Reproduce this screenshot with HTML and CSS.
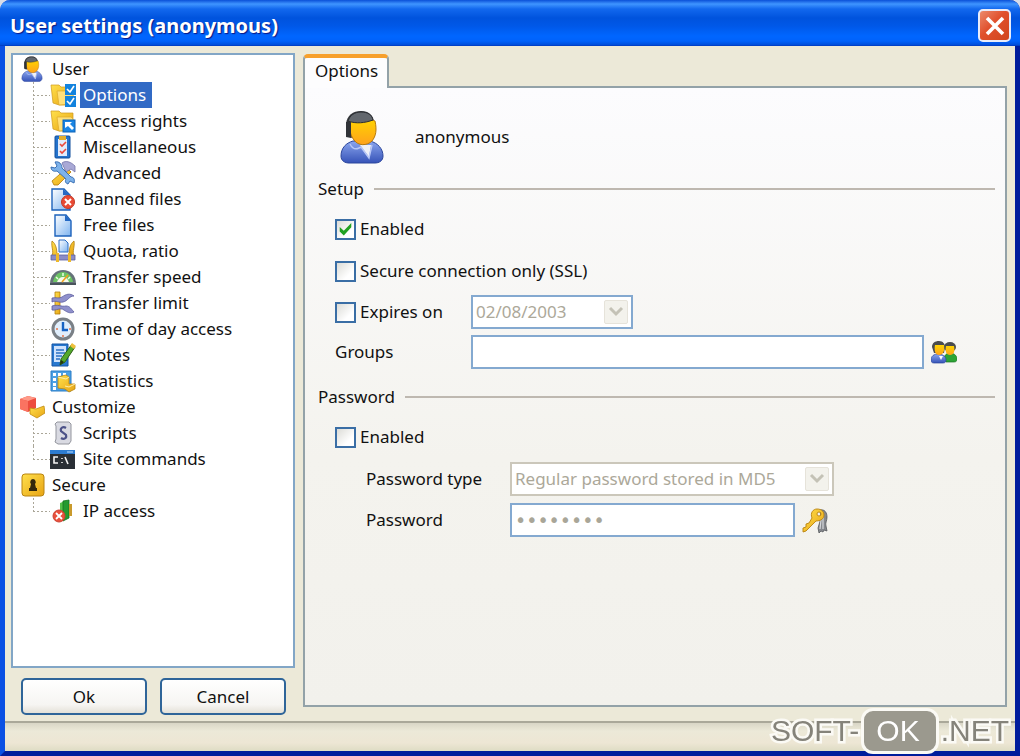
FILE: index.html
```html
<!DOCTYPE html>
<html lang="en">
<head>
  <meta charset="utf-8">
  <title>User settings (anonymous)</title>
  <link rel="stylesheet" href="styles.css">
</head>
<body>

<svg width="0" height="0" class="defs" aria-hidden="true">
  <defs>
    <linearGradient id="gold" x1="0" y1="0" x2="1" y2="1">
      <stop offset="0" stop-color="#ffe04c"/><stop offset="1" stop-color="#e8a414"/>
    </linearGradient>
    <linearGradient id="face" x1="0" y1="0" x2="0" y2="1">
      <stop offset="0" stop-color="#ffd400"/><stop offset="1" stop-color="#ffa21c"/>
    </linearGradient>
    <linearGradient id="suit" x1="0" y1="0" x2="0" y2="1">
      <stop offset="0" stop-color="#8ba6ee"/><stop offset="1" stop-color="#3653b8"/>
    </linearGradient>
    <linearGradient id="paper" x1="0" y1="0" x2="1" y2="1">
      <stop offset="0" stop-color="#ffffff"/><stop offset="1" stop-color="#7db3f0"/>
    </linearGradient>
  </defs>

  <symbol id="i-user" viewBox="0 0 44 54">
    <path d="M1 46c0-8 5-13 12-15h17c8 2 13 8 13 15 0 5-4 7-8 7H9c-4 0-8-2-8-7z" fill="url(#suit)" stroke="#2b469c"/>
    <path d="M20 35l9 12 2-12z" fill="#f0f1f8"/>
    <path d="M10 34c2 4 5 6 9 4l2-1 8 11 3-13" fill="none" stroke="#b9c8f6" stroke-width="1.4"/>
    <path d="M6 14C7 5 13 1 21 1c8 0 12 4 13 11l-3 6-20 10-5-1z" fill="#33363a"/>
    <path d="M10 11c8-3 17-3 25 0 2 9 1 15-3 20-5 5-14 5-18-1-4-5-5-12-4-19z" fill="url(#face)" stroke="#b87a0a"/>
    <path d="M8 11c2-6 7-9 13-9 7 0 11 3 12 8-8 3-17 4-25 1z" fill="#62676d" stroke="#2c2f33"/>
    <path d="M6 12h5v15H8l-2-3z" fill="#303338"/>
  </symbol>

  <symbol id="i-folder" viewBox="0 0 26 26">
    <path d="M1 3h8l2 2h12v18H9l-6-2z" fill="url(#gold)" stroke="#cf9a1c" stroke-width=".7"/>
    <path d="M7 9h14l2 2v11l-14 1z" fill="#ffe079" stroke="#dba92c" stroke-width=".7"/>
  </symbol>

  <symbol id="i-options" viewBox="0 0 26 26">
    <use href="#i-folder"/>
    <rect x="15" y="2" width="11" height="11" fill="#1383de"/>
    <rect x="15" y="14" width="11" height="11" fill="#1383de"/>
    <path d="M17 7l3 3 4-6M17 19l3 3 4-6" fill="none" stroke="#fff" stroke-width="1.6"/>
  </symbol>

  <symbol id="i-access" viewBox="0 0 26 26">
    <use href="#i-folder"/>
    <rect x="13" y="12" width="12" height="12" fill="#1b86e4" stroke="#0c62b8"/>
    <path d="M15 14h7l-2 2 4 4-2 2-4-4-3 2z" fill="#fff"/>
  </symbol>

  <symbol id="i-misc" viewBox="0 0 26 26">
    <rect x="5" y="2" width="15" height="22" rx="1" fill="#2473cc" stroke="#114f9c"/>
    <rect x="8" y="5" width="9" height="17" fill="#e2ecfc"/>
    <path d="M9 2h7v4H9z" fill="#e4ae2c"/>
    <path d="M10 10l2 2 4-4M10 17l2 2 4-4" fill="none" stroke="#ec4a3c" stroke-width="1.6"/>
  </symbol>

  <symbol id="i-advanced" viewBox="0 0 26 26">
    <path d="M2 21L17 8l4 4L8 25H4z" fill="url(#gold)" stroke="#b37a08" stroke-width=".8"/>
    <path d="M12 3c4-3 9-1 13 3v6l-4-3-5 3z" fill="#a9a9d6" stroke="#7474aa" stroke-width=".8"/>
    <path d="M1 7l4 1 2-2-2-4c4-1 7 2 7 6l9 9c3 0 4 3 3 6l-4-2-2 3c-3-1-3-3-2-5l-9-8C3 12 1 10 1 7z" fill="#7db2ea" stroke="#2e65ae" stroke-width=".9"/>
  </symbol>

  <symbol id="i-file" viewBox="0 0 26 26">
    <path d="M5 3h11l5 6v15H5z" fill="url(#paper)" stroke="#1d62bb" stroke-width="1.4"/>
    <path d="M15 3v6h6z" fill="#2468c4"/>
  </symbol>

  <symbol id="i-banned" viewBox="0 0 26 26">
    <path d="M2 3h12l6 6v15H2z" fill="url(#paper)" stroke="#1d62bb" stroke-width="1.4"/>
    <path d="M13 3v6h7z" fill="#2468c4"/>
    <circle cx="18" cy="16" r="6.500" fill="#e94a34" stroke="#c23a28"/>
    <path d="M15 13l6 6M21 13l-6 6" stroke="#fff" stroke-width="2"/>
  </symbol>

  <symbol id="i-quota" viewBox="0 0 26 26">
    <path d="M9 2h6l3 3v9H9z" fill="url(#paper)" stroke="#2a6cc4"/>
    <path d="M2 3c4 3 5 8 5 15H2c2-5-1-9 0-15zM24 3c-4 3-5 8-5 15h5c-2-5 1-9 0-15z" fill="url(#gold)" stroke="#b07c0c" stroke-width=".8"/>
    <path d="M1 17h24v5H1z" fill="#8b8cc6" stroke="#5d5f9c" stroke-width=".8"/>
    <path d="M6 15h3v9H6zM18 15h3v9h-3z" fill="#edb92c"/>
  </symbol>

  <symbol id="i-speed" viewBox="0 0 26 26">
    <path d="M0 20C0 11 6 6 13 6s13 5 13 14z" fill="#66727a"/>
    <path d="M3 18c1-6 5-10 10-10s9 4 10 10z" fill="#6cc464"/>
    <path d="M7 18c1-3 3-5 6-5s5 2 6 5z" fill="#f5faea"/>
    <path d="M6 13l2 2M13 9v3M20 13l-2 2" stroke="#eaffdf" stroke-width="1.5"/>
    <path d="M12 18l6-7" stroke="#f4a01c" stroke-width="1.6"/>
    <path d="M0 19h26v2H0z" fill="#4a545c"/>
  </symbol>

  <symbol id="i-limit" viewBox="0 0 26 26">
    <path d="M5 2h5v22H5z" fill="url(#gold)" stroke="#b07c0c" stroke-width=".8"/>
    <path d="M2 8c4-1 7 1 10-1 4-3 8-4 12-1-5 0-6 5-11 6-4 1-7-2-11 0zM2 16c6-2 9 1 14 0 4 0 5 3 8 6-4 2-7 0-10-2-4-3-8 1-12 0z" fill="#8f90cc" stroke="#5a5c9e" stroke-width=".8"/>
  </symbol>

  <symbol id="i-clock" viewBox="0 0 26 26">
    <circle cx="13" cy="13" r="10" fill="#e0eefc" stroke="#7a8086" stroke-width="3"/>
    <path d="M13 6v8h5" fill="none" stroke="#1763c4" stroke-width="2.400"/>
    <path d="M13 19v2M6 13h2M19 13h2" stroke="#e87446" stroke-width="1.500"/>
  </symbol>

  <symbol id="i-notes" viewBox="0 0 26 26">
    <path d="M2 2h16v22H2z" fill="#2878d0" stroke="#1555a4"/>
    <path d="M4 4h12v16H4z" fill="#cfe2fc"/>
    <path d="M6 8h8M6 11h9M6 14h6M6 17h4" stroke="#2d71c4" stroke-width="1.600"/>
    <path d="M22 2l3 3-10 15-5 3 1-6z" fill="#54a92c" stroke="#2a5f12"/>
    <path d="M20 4l2-3 4 3-2 3z" fill="#efc03c"/>
    <path d="M11 18l3 2-4 3z" fill="#26340f"/>
  </symbol>

  <symbol id="i-stats" viewBox="0 0 26 26">
    <path d="M1 3h20v20H1z" fill="#4ba0e4" stroke="#2a7cc6"/>
    <path d="M3 5h3v3H3zM8 5h3v3H8zM13 5h3v3h-3zM3 10h3v3H3zM3 15h3v3H3zM3 19h3v3H3z" fill="#fff"/>
    <path d="M8 9l8-2 3 2v7l6 0v5l-6 3-4-3-7-1z" fill="url(#gold)" stroke="#bb860e" stroke-width=".8"/>
    <path d="M8 9l8 2 3-2M15 18l4 1 6-3" fill="none" stroke="#ffeeaa"/>
  </symbol>

  <symbol id="i-customize" viewBox="0 0 26 26">
    <path d="M1 5l8-3 8 2v10l-8 4-8-3z" fill="#ed4c3e"/>
    <path d="M1 5l8-3 8 2-8 3z" fill="#ff9a88"/>
    <path d="M1 5l8 2v11l-8-3z" fill="#fa7361"/>
    <path d="M11 14l6 1 8-3 1 7-8 5-7-4z" fill="url(#gold)" stroke="#c28c10" stroke-width=".8"/>
  </symbol>

  <symbol id="i-script" viewBox="0 0 26 26">
    <path d="M7 2h12l2 2v17l-2 3H8l-3-2 1-3V6L5 4z" fill="#d9dae2" stroke="#94969e"/>
    <path d="M16 8c-3-2-6 0-5 3l5 4c1 3-2 5-5 3" fill="none" stroke="#4c5288" stroke-width="2.200"/>
  </symbol>

  <symbol id="i-console" viewBox="0 0 26 26">
    <rect x="0" y="4" width="25" height="19" fill="#2a2f36"/>
    <rect x="0" y="4" width="25" height="4" fill="#2d7cd2"/>
    <path d="M17 6h6" stroke="#bcdcff"/>
    <path d="M8 11H4v6h4M12 12v1M12 16v1M15 11l3 7" fill="none" stroke="#f3f3f3" stroke-width="1.600"/>
  </symbol>

  <symbol id="i-secure" viewBox="0 0 26 26">
    <rect x="3" y="2" width="22" height="22" rx="3" fill="url(#gold)" stroke="#b98410"/>
    <path d="M14 7a3 3 0 0 1 2 5l1 4h1v3h-8v-3h1l1-4a3 3 0 0 1 2-5z" fill="#33280c"/>
  </symbol>

  <symbol id="i-ip" viewBox="0 0 26 26">
    <path d="M10 5l5-2v18l-5-2z" fill="#55c04a"/>
    <path d="M13 3l6-1v18l-6 3z" fill="#249a30" stroke="#127320" stroke-width=".8"/>
    <path d="M19 6h3v12h-3z" fill="#c99a2c"/>
    <circle cx="9" cy="18" r="6" fill="#e9503c" stroke="#cc4434"/>
    <path d="M6 15l6 6M12 15l-6 6" stroke="#fff" stroke-width="1.800"/>
  </symbol>

  <symbol id="i-groups" viewBox="0 0 26 26">
    <path d="M13 20c0-4 3-6 6-6s7 2 7 6c0 2-1 3-3 3h-8z" fill="#2da434" stroke="#177420" stroke-width=".7"/>
    <ellipse cx="19" cy="8" rx="6" ry="5" fill="#4a4c4e"/>
    <path d="M15 7h8c1 5 0 9-4 9s-5-4-4-9z" fill="url(#face)"/>
    <path d="M0 21c0-4 3-6 7-6s8 2 8 6c0 2-1 3-3 3H3c-2 0-3-1-3-3z" fill="url(#suit)" stroke="#2b469c" stroke-width=".7"/>
    <path d="M1 8c0-4 3-6 7-6s6 3 6 6l-1 6H3z" fill="#4a4c4e"/>
    <path d="M4 6h9c1 6-1 10-5 10s-5-5-4-10z" fill="url(#face)"/>
    <path d="M8 17l2 4 2-4z" fill="#fff"/>
  </symbol>

  <symbol id="i-keys" viewBox="0 0 26 26">
    <path d="M18 3c5-1 7 3 7 7s-2 6-1 9l1 5-3-1-1 2-2-1-2 2-1-5 3-10z" fill="#85888d" stroke="#55585c" stroke-width=".8"/>
    <path d="M21 10v12M19 13l-1 9" stroke="#d7d9dc" stroke-width="1.200"/>
    <path fill-rule="evenodd" d="M15 2c5 0 7 3 7 6 0 4-4 6-8 6L4 24l-3 1v-4l3-1v-3l3-1 3-5C8 6 11 2 15 2zm2 3a2 2 0 1 0 0 4 2 2 0 0 0 0-4z" fill="url(#gold)" stroke="#b9820e" stroke-width=".9"/>
  </symbol>
</svg>

<div class="window">
  <header class="titlebar">
    <h1>User settings (anonymous)</h1>
    <button type="button" class="close" aria-label="Close">
      <svg viewBox="0 0 20 20" width="20" height="20"><path d="M2 2l16 16M18 2L2 18" stroke="#fff" stroke-width="3.600" fill="none"/></svg>
    </button>
  </header>

  <main class="client">
    <div class="side">
      <nav class="tree">
        <ul>
          <li>
            <div class="node"><svg class="icon"><use href="#i-user"/></svg><span class="label">User</span></div>
            <ul class="children">
              <li class="node"><svg class="icon"><use href="#i-options"/></svg><span class="label selected">Options</span></li>
              <li class="node"><svg class="icon"><use href="#i-access"/></svg><span class="label">Access rights</span></li>
              <li class="node"><svg class="icon"><use href="#i-misc"/></svg><span class="label">Miscellaneous</span></li>
              <li class="node"><svg class="icon"><use href="#i-advanced"/></svg><span class="label">Advanced</span></li>
              <li class="node"><svg class="icon"><use href="#i-banned"/></svg><span class="label">Banned files</span></li>
              <li class="node"><svg class="icon"><use href="#i-file"/></svg><span class="label">Free files</span></li>
              <li class="node"><svg class="icon"><use href="#i-quota"/></svg><span class="label">Quota, ratio</span></li>
              <li class="node"><svg class="icon"><use href="#i-speed"/></svg><span class="label">Transfer speed</span></li>
              <li class="node"><svg class="icon"><use href="#i-limit"/></svg><span class="label">Transfer limit</span></li>
              <li class="node"><svg class="icon"><use href="#i-clock"/></svg><span class="label">Time of day access</span></li>
              <li class="node"><svg class="icon"><use href="#i-notes"/></svg><span class="label">Notes</span></li>
              <li class="node"><svg class="icon"><use href="#i-stats"/></svg><span class="label">Statistics</span></li>
            </ul>
          </li>
          <li>
            <div class="node"><svg class="icon"><use href="#i-customize"/></svg><span class="label">Customize</span></div>
            <ul class="children">
              <li class="node"><svg class="icon"><use href="#i-script"/></svg><span class="label">Scripts</span></li>
              <li class="node"><svg class="icon"><use href="#i-console"/></svg><span class="label">Site commands</span></li>
            </ul>
          </li>
          <li>
            <div class="node"><svg class="icon"><use href="#i-secure"/></svg><span class="label">Secure</span></div>
            <ul class="children">
              <li class="node"><svg class="icon"><use href="#i-ip"/></svg><span class="label">IP access</span></li>
            </ul>
          </li>
        </ul>
      </nav>
      <div class="buttons">
        <button type="button" class="btn">Ok</button>
        <button type="button" class="btn">Cancel</button>
      </div>
    </div>

    <div class="tabs">
      <button type="button" class="tab">Options</button>
      <form class="panel">
        <div class="who">
          <svg width="44" height="54"><use href="#i-user"/></svg>
          <span>anonymous</span>
        </div>

        <h2 class="group">Setup</h2>
        <div class="setup">
          <div class="row check">
            <input type="checkbox" id="enabled" checked>
            <label for="enabled">Enabled</label>
          </div>
          <div class="row check">
            <input type="checkbox" id="ssl">
            <label for="ssl">Secure connection only (SSL)</label>
          </div>
          <div class="row field">
            <div class="name check">
              <input type="checkbox" id="expires">
              <label for="expires">Expires on</label>
            </div>
            <span class="combo date">
              <select disabled aria-label="Expiry date"><option>02/08/2003</option></select>
              <span class="arrow"><svg width="16" height="12" viewBox="0 0 16 12"><path d="M2 2l6 6 6-6" fill="none" stroke="#c4c2b6" stroke-width="3"/></svg></span>
            </span>
          </div>
          <div class="row field">
            <label class="name" for="groups">Groups</label>
            <input type="text" id="groups" class="text">
            <svg class="icon"><use href="#i-groups"/></svg>
          </div>
        </div>

        <h2 class="group">Password</h2>
        <div class="setup">
          <div class="row check">
            <input type="checkbox" id="pass_enabled">
            <label for="pass_enabled">Enabled</label>
          </div>
        </div>
        <div class="pass">
          <div class="row field">
            <label class="name" for="pass_type">Password type</label>
            <span class="combo type">
              <select id="pass_type" disabled><option>Regular password stored in MD5</option></select>
              <span class="arrow"><svg width="16" height="12" viewBox="0 0 16 12"><path d="M2 2l6 6 6-6" fill="none" stroke="#c4c2b6" stroke-width="3"/></svg></span>
            </span>
          </div>
          <div class="row field">
            <label class="name" for="pass">Password</label>
            <input type="password" id="pass" class="text" value="12345678" disabled>
            <svg class="icon"><use href="#i-keys"/></svg>
          </div>
        </div>
      </form>
    </div>
  </main>

  <footer class="status"></footer>
</div>

<div class="stamp"><span>SOFT-</span><span class="ok">OK</span><span>.NET</span></div>

</body>
</html>
```

FILE: styles.css
```css
* {
    box-sizing: border-box;
}
body {
    margin: 0;
    background: #d8dce8;
    font-family: "Noto Sans", Tahoma, sans-serif;
    font-size: 17px;
    line-height: 24px;
    color: #111;
}
button, input, select {
    font: inherit;
    color: inherit;
}
ul {
    list-style: none;
    margin: 0;
    padding: 0;
}
.defs {
    position: absolute;
}

/* window frame */
.window {
    display: flex;
    flex-direction: column;
    min-height: 100vh;
    border: solid;
    border-width: 0 5px 5px;
    border-color: #0a4fe0 #001c9c #001c9c #0a50e4;
    border-radius: 10px 10px 0 0;
    background: #ece9d8;
}
.titlebar {
    display: flex;
    align-items: center;
    justify-content: space-between;
    height: 46px;
    margin: 0 -5px;
    padding: 6px 9px 0 10px;
    border-radius: 10px 10px 0 0;
    border-bottom: 1px solid #0040c8;
    background: linear-gradient(#0a50d8 0, #3f95ff 4px, #1268ee 9px, #0053dd 18px, #0058e8 26px, #0066ff 36px, #0062fb 41px, #0048d0 46px);
}
.titlebar h1 {
    margin: 0;
    font-size: 20px;
    font-weight: bold;
    color: #fff;
    text-shadow: 1px 1px 1px #0a1883;
}
.close {
    display: flex;
    align-items: center;
    justify-content: center;
    width: 33px;
    height: 33px;
    padding: 0;
    border: 2px solid #e8ecfa;
    border-radius: 5px;
    background: linear-gradient(135deg, #ec8a6c, #e0502c 45%, #d0451c);
}

.client {
    flex: 1;
    display: flex;
    gap: 8px;
    padding: 7px 8px 6px 6px;
}

/* left side */
.side {
    display: flex;
    flex-direction: column;
    gap: 10px;
    width: 284px;
}
.tree {
    flex: 1;
    padding: 1px 6px;
    border: 2px solid #82a6c6;
    background: #fff;
}
.node {
    display: flex;
    align-items: center;
    gap: 4px;
    height: 26px;
}
.icon {
    flex: none;
    width: 26px;
    height: 26px;
}
.label {
    padding: 0 6px 0 3px;
    line-height: 26px;
    white-space: nowrap;
}
.selected {
    background: #316ac5;
    color: #fff;
}
.children {
    margin-left: 14px;
}
/* dotted connector lines */
.children .node::before {
    content: "";
    width: 17px;
    height: 26px;
    margin-right: -4px;
    background:
        repeating-linear-gradient(#aaa698 0 2px, #fff 2px 4px) 0 0 / 1px 100% no-repeat,
        repeating-linear-gradient(90deg, #aaa698 0 2px, #fff 2px 4px) 0 13px / 100% 1px no-repeat;
}
.children .node:last-child::before {
    background-size: 1px 13px, 100% 1px;
}
.buttons {
    display: flex;
    gap: 13px;
    padding: 0 9px 0 10px;
}
.btn {
    flex: 1;
    height: 37px;
    padding: 0;
    border: 2px solid #2f6599;
    border-radius: 5px;
    background: linear-gradient(#fff, #f6f5f2 75%, #e4e1d8);
}

/* right side */
.tabs {
    flex: 1;
    display: flex;
    flex-direction: column;
    align-items: flex-start;
    padding: 1px 0 8px;
}
.tab {
    height: 34px;
    margin-bottom: -2px;
    padding: 0 9px 5px 10px;
    border: 2px solid #93a2a8;
    border-top: 4px solid #f7a02c;
    border-bottom: 0;
    border-radius: 5px 5px 0 0;
    background: #fdfdfe;
    z-index: 1;
}
.panel {
    flex: 1;
    width: 100%;
    padding: 22px 10px 0 13px;
    border: 2px solid #93a2a8;
    background: linear-gradient(#fcfcfe, #f4f3ee 60%, #f2f1ec);
}
.who {
    display: flex;
    align-items: center;
    gap: 31px;
    padding-left: 22px;
}
.group {
    display: flex;
    align-items: center;
    gap: 10px;
    margin: 13px 0 7px;
    font-size: 17px;
    font-weight: normal;
}
.group::after {
    content: "";
    flex: 1;
    height: 2px;
    background: #beb8b0;
}
.setup {
    padding-left: 17px;
}
.pass {
    padding-left: 48px;
}
.row {
    display: flex;
    align-items: center;
    height: 42px;
}
.field {
    gap: 7px;
    height: 40px;
}
.pass .field {
    height: 41px;
}
.name {
    width: 129px;
}
.pass .name {
    width: 137px;
}
.check {
    display: flex;
    align-items: center;
    gap: 4px;
}
input[type=checkbox] {
    appearance: none;
    display: grid;
    width: 21px;
    height: 21px;
    margin: 0;
    border: 2px solid #3a6ea5;
    background: linear-gradient(135deg, #dcdcd7, #fff 70%);
}
input[type=checkbox]:checked::before {
    content: "";
    background: #21a121;
    clip-path: polygon(16% 38%, 40% 60%, 84% 14%, 84% 40%, 40% 88%, 16% 64%);
}
.text {
    height: 34px;
    padding: 0 4px;
    border: 2px solid #84a9d0;
    background: #fff;
}
#groups {
    flex: 1;
    max-width: 453px;
}
#pass {
    width: 285px;
    padding: 0 3px;
    font-family: "DejaVu Sans", sans-serif;
    font-size: 19px;
    color: #a9a698;
}
.combo {
    display: grid;
    height: 34px;
}
.combo select,
.combo .arrow {
    grid-area: 1 / 1;
}
.combo select {
    appearance: none;
    padding: 0 3px;
    border: 2px solid #84a9d0;
    border-radius: 0;
    background: #fff;
    color: #aca899;
    opacity: 1;
}
.date {
    width: 162px;
}
.type {
    width: 324px;
}
.type select {
    border-color: #cbc7ba;
}
.arrow {
    display: flex;
    align-items: center;
    justify-content: center;
    justify-self: end;
    width: 24px;
    margin: 5px;
    border: 1px solid #e6e3da;
    border-radius: 2px;
    background: #f3f2ec;
    pointer-events: none;
}

.status {
    height: 30px;
    border-top: 2px solid #aaa899;
    background: linear-gradient(#d9d6c6, #ece9d8 8px, #ede6d4 20px, #dedcc4);
}

/* site stamp over the bottom right corner */
.stamp {
    position: fixed;
    right: 11px;
    bottom: 2px;
    display: flex;
    align-items: center;
    gap: 2px;
    font: 30px/40px "Liberation Sans", Arial, sans-serif;
    color: #85837a;
    -webkit-text-stroke: 5px #fbfaf5;
    paint-order: stroke;
}
.ok {
    padding: 0 16px 0 12px;
    border: 3px solid #fbfaf5;
    border-radius: 12px;
    background: #9b998e;
    color: #fff;
    -webkit-text-stroke: 0;
}
```
